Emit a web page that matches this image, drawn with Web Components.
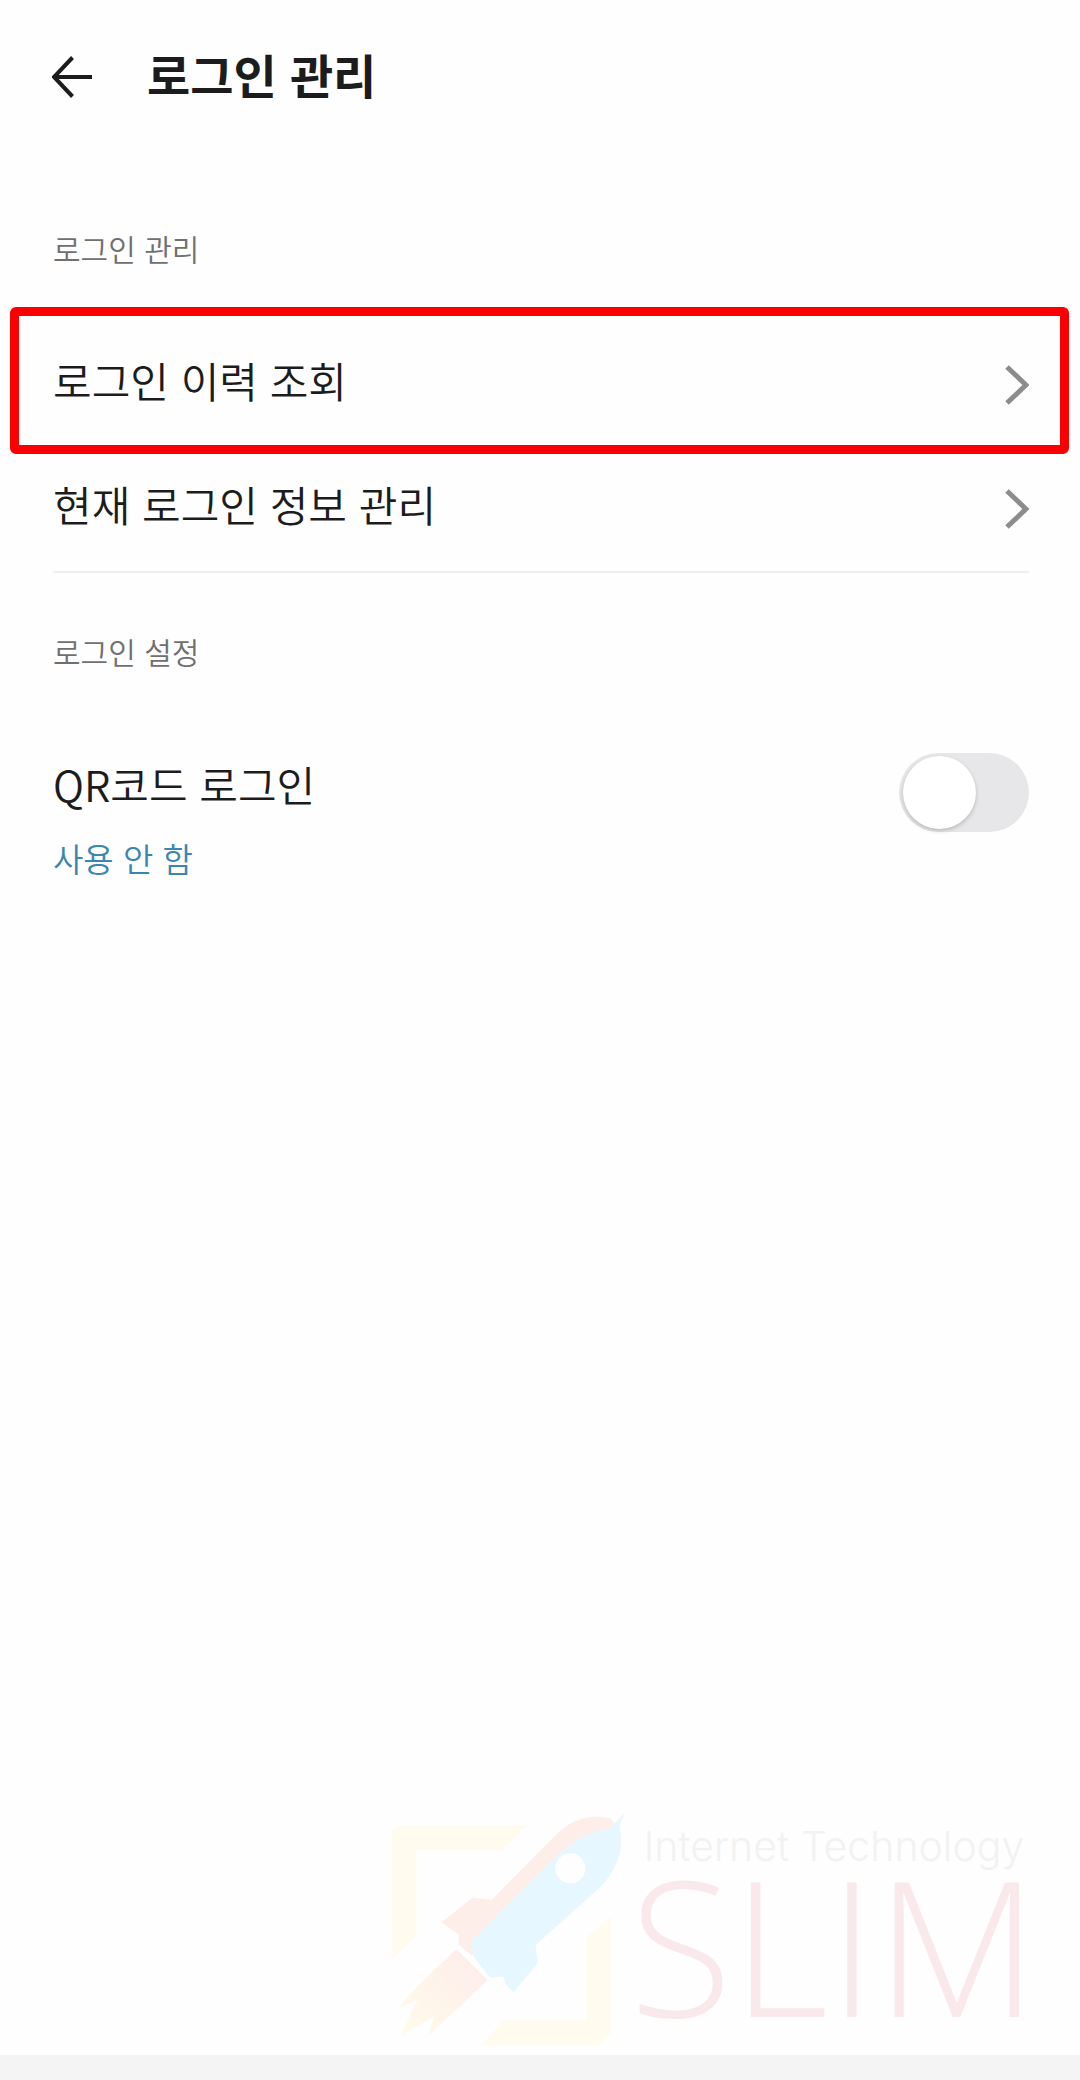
<!DOCTYPE html>
<html lang="ko">
<head>
<meta charset="utf-8">
<meta name="viewport" content="width=device-width, initial-scale=1">
<title>로그인 관리</title>
<style>
  body {
    margin: 0;
    background: #fefefe;
    color: #1c1c1c;
    font-family: "Noto Sans CJK KR DemiLight", "Noto Sans CJK KR", sans-serif;
    font-weight: 350;
  }
</style>
</head>
<body>
<login-page>
  <page-header slot="header">로그인 관리</page-header>
  <setting-section label="로그인 관리" divided>
    <link-row highlighted>로그인 이력 조회</link-row>
    <link-row>현재 로그인 정보 관리</link-row>
  </setting-section>
  <setting-section label="로그인 설정">
    <switch-row status="사용 안 함">QR코드 로그인</switch-row>
  </setting-section>
  <brand-mark slot="footer" tagline="Internet Technology">SLIM</brand-mark>
</login-page>

<script>
(function () {
  "use strict";

  function render(el, css, html) {
    el.attachShadow({ mode: "open" }).innerHTML =
      "<style>*{box-sizing:border-box}" + css + "</style>" + html;
  }

  class LoginPage extends HTMLElement {
    connectedCallback() {
      render(
        this,
        `
        :host { display: flex; flex-direction: column; min-height: 100vh; }
        main { flex: 1; }
        footer { border-bottom: 25px solid #f4f4f4; }
        `,
        `
        <slot name="header"></slot>
        <main><slot></slot></main>
        <footer><slot name="footer"></slot></footer>
        `
      );
    }
  }

  class PageHeader extends HTMLElement {
    connectedCallback() {
      render(
        this,
        `
        :host { display: block; padding: 42px 52px 58px; }
        header { display: flex; align-items: center; gap: 54px; height: 70px; }
        button { display: flex; padding: 0; border: 0; background: none; color: inherit; }
        h1 { margin: 0; padding-bottom: 6px; font-family: "Noto Sans CJK KR", sans-serif; font-size: 47px; line-height: 64px; font-weight: 700; }
        `,
        `
        <header>
          <button type="button" aria-label="뒤로">
            <svg width="41" height="42" viewBox="0 0 41 42" fill="none" stroke="currentColor" stroke-width="4">
              <path d="M20.500 1.500 2 21l18.500 19.500M2 21h38" />
            </svg>
          </button>
          <h1><slot></slot></h1>
        </header>
        `
      );
    }
  }

  class SettingSection extends HTMLElement {
    connectedCallback() {
      render(
        this,
        `
        :host { display: block; padding: 56px 51px 0 53px; }
        :host([divided]) section { border-bottom: 2px solid #efefef; }
        h2 { margin: 0 0 53px; color: #707070; font-size: 30px; line-height: 44px; font-weight: inherit; }
        `,
        `
        <section>
          <h2>${this.getAttribute("label")}</h2>
          <slot></slot>
        </section>
        `
      );
    }
  }

  class LinkRow extends HTMLElement {
    connectedCallback() {
      render(
        this,
        `
        :host { display: block; position: relative; }
        a {
          display: flex; align-items: center; justify-content: space-between;
          height: 124px; color: inherit; text-decoration: none;
          font-size: 42px; line-height: 60px;
        }
        span { padding-bottom: 10px; }
        svg { color: #8c8c8c; }
        /* frame drawn over the row, reaching out to the screen edges */
        :host([highlighted])::after {
          content: ""; position: absolute; inset: -16px -40px -7px -43px;
          border: 9px solid #fb0000; border-radius: 6px; pointer-events: none;
        }
        `,
        `
        <a href="#">
          <span><slot></slot></span>
          <svg width="24" height="40" viewBox="0 0 24 40" fill="none" stroke="currentColor" stroke-width="5" aria-hidden="true">
            <path d="M2 2 21 20 2 38" />
          </svg>
        </a>
        `
      );
    }
  }

  class SwitchRow extends HTMLElement {
    connectedCallback() {
      render(
        this,
        `
        :host { display: block; padding-top: 27px; }
        .row { display: flex; align-items: flex-start; justify-content: space-between; }
        .text { display: flex; flex-direction: column; gap: 20px; padding-top: 1px; }
        label { font-size: 42px; line-height: 60px; }
        .status { color: #3a86b0; font-size: 33px; line-height: 48px; }
        input {
          appearance: none; margin: 0; width: 130px; height: 79px; padding: 3px 4px;
          border-radius: 40px; background: #e7e7e9;
        }
        input::before {
          content: ""; display: block; width: 73px; height: 73px; border-radius: 50%;
          background: #fff; box-shadow: 0 2px 4px rgba(0, 0, 0, 0.2);
        }
        input:checked { background: #3a86b0; }
        input:checked::before { margin-left: auto; }
        `,
        `
        <div class="row">
          <div class="text">
            <label for="toggle"><slot></slot></label>
            <span class="status" id="status">${this.getAttribute("status")}</span>
          </div>
          <input type="checkbox" role="switch" id="toggle" aria-describedby="status">
        </div>
        `
      );
    }
  }

  class BrandMark extends HTMLElement {
    connectedCallback() {
      render(
        this,
        `
        :host {
          display: flex; justify-content: flex-end; gap: 4px; padding: 0 42px 8px;
          font-family: "Open Sans", sans-serif; font-weight: 350;
        }
        .words { display: flex; flex-direction: column; padding-top: 10px; }
        .tagline {
          padding-left: 14px; color: #f2f2f2;
          font-family: Inter, sans-serif; font-size: 41px; line-height: 48px; font-weight: 300;
        }
        .name { color: #fae9ea; font-size: 188px; line-height: 148px; }
        `,
        `
        <svg width="235" height="235" viewBox="55 65 705 705" aria-hidden="true">
          <defs>
            <linearGradient id="flame" x1="300" y1="520" x2="110" y2="710" gradientUnits="userSpaceOnUse">
              <stop offset="0" stop-color="#feeeea" />
              <stop offset="1" stop-color="#fffaea" />
            </linearGradient>
          </defs>
          <path fill="#fffbee" d="M60 512V130Q62 104 90 104H468L392 180H134V436Z" />
          <path fill="#fffbee" d="M718 380V728L680 765H328L396 690H644V440Z" />
          <path fill="url(#flame)" d="M254 476 348 570 168 738 188 678 88 736 136 628 76 656 136 590Z" />
          <path fill="#feeeea" d="M728 102 718 84Q620 62 550 136L360 328 302 322 210 396 262 434 260 462 300 496 540 300Z" />
          <path fill="#e6f7ff" d="M762 66 730 98 714 116Q630 126 560 192L302 450Q292 470 306 500L356 562 394 558 404 584 426 606 498 518 492 464 690 286Q764 204 744 108L752 84Z" />
          <circle cx="596" cy="234" r="45" fill="#fefefe" />
        </svg>
        <div class="words">
          <span class="tagline">${this.getAttribute("tagline")}</span>
          <span class="name"><slot></slot></span>
        </div>
        `
      );
    }
  }

  customElements.define("login-page", LoginPage);
  customElements.define("page-header", PageHeader);
  customElements.define("setting-section", SettingSection);
  customElements.define("link-row", LinkRow);
  customElements.define("switch-row", SwitchRow);
  customElements.define("brand-mark", BrandMark);
})();
</script>
</body>
</html>
